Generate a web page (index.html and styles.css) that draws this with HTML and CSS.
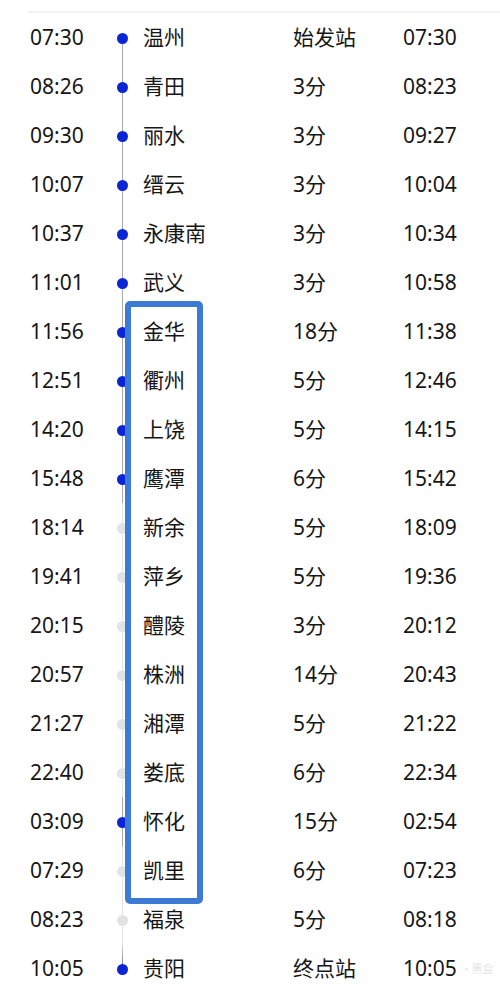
FILE: index.html
```html
<!DOCTYPE html>
<html lang="zh-CN">
<head>
  <meta charset="UTF-8" />
  <title>经停站</title>
  <link rel="stylesheet" href="styles.css">
</head>
<body>

  <div class="page">
    <div class="top-rule"></div>

    <ul class="stops">
      <li class="stop first"><span class="time">07:30</span><span class="node"><i class="dot"></i></span><span class="name">温州</span><span class="wait">始发站</span><span class="time">07:30</span></li>
      <li class="stop"><span class="time">08:26</span><span class="node"><i class="dot"></i></span><span class="name">青田</span><span class="wait">3分</span><span class="time">08:23</span></li>
      <li class="stop"><span class="time">09:30</span><span class="node"><i class="dot"></i></span><span class="name">丽水</span><span class="wait">3分</span><span class="time">09:27</span></li>
      <li class="stop"><span class="time">10:07</span><span class="node"><i class="dot"></i></span><span class="name">缙云</span><span class="wait">3分</span><span class="time">10:04</span></li>
      <li class="stop"><span class="time">10:37</span><span class="node"><i class="dot"></i></span><span class="name">永康南</span><span class="wait">3分</span><span class="time">10:34</span></li>
      <li class="stop"><span class="time">11:01</span><span class="node"><i class="dot"></i></span><span class="name">武义</span><span class="wait">3分</span><span class="time">10:58</span></li>
      <li class="stop"><span class="time">11:56</span><span class="node"><i class="dot"></i></span><span class="name">金华</span><span class="wait">18分</span><span class="time">11:38</span></li>
      <li class="stop"><span class="time">12:51</span><span class="node"><i class="dot"></i></span><span class="name">衢州</span><span class="wait">5分</span><span class="time">12:46</span></li>
      <li class="stop"><span class="time">14:20</span><span class="node"><i class="dot"></i></span><span class="name">上饶</span><span class="wait">5分</span><span class="time">14:15</span></li>
      <li class="stop"><span class="time">15:48</span><span class="node"><i class="dot"></i></span><span class="name">鹰潭</span><span class="wait">6分</span><span class="time">15:42</span></li>
      <li class="stop skip"><span class="time">18:14</span><span class="node"><i class="dot"></i></span><span class="name">新余</span><span class="wait">5分</span><span class="time">18:09</span></li>
      <li class="stop skip"><span class="time">19:41</span><span class="node"><i class="dot"></i></span><span class="name">萍乡</span><span class="wait">5分</span><span class="time">19:36</span></li>
      <li class="stop skip"><span class="time">20:15</span><span class="node"><i class="dot"></i></span><span class="name">醴陵</span><span class="wait">3分</span><span class="time">20:12</span></li>
      <li class="stop skip"><span class="time">20:57</span><span class="node"><i class="dot"></i></span><span class="name">株洲</span><span class="wait">14分</span><span class="time">20:43</span></li>
      <li class="stop skip"><span class="time">21:27</span><span class="node"><i class="dot"></i></span><span class="name">湘潭</span><span class="wait">5分</span><span class="time">21:22</span></li>
      <li class="stop skip"><span class="time">22:40</span><span class="node"><i class="dot"></i></span><span class="name">娄底</span><span class="wait">6分</span><span class="time">22:34</span></li>
      <li class="stop"><span class="time">03:09</span><span class="node"><i class="dot"></i></span><span class="name">怀化</span><span class="wait">15分</span><span class="time">02:54</span></li>
      <li class="stop skip"><span class="time">07:29</span><span class="node"><i class="dot"></i></span><span class="name">凯里</span><span class="wait">6分</span><span class="time">07:23</span></li>
      <li class="stop skip before-last"><span class="time">08:23</span><span class="node"><i class="dot"></i></span><span class="name">福泉</span><span class="wait">5分</span><span class="time">08:18</span></li>
      <li class="stop last"><span class="time">10:05</span><span class="node"><i class="dot"></i></span><span class="name">贵阳</span><span class="wait">终点站</span><span class="time">10:05</span></li>
    </ul>

    <div class="highlight"></div>
    <div class="watermark">◔ 黑盒</div>
  </div>

</body>
</html>
```

FILE: styles.css
```css
body {
  margin: 0;
  background: #fff;
  font-family: "Noto Sans", "Noto Sans CJK SC", sans-serif;
  color: #161616;
}

.page {
  position: relative;
  width: 500px;
  height: 1003px;
  overflow: hidden;
}

.top-rule {
  margin: 11px 0 0 28px;
  height: 2px;
  background: #f2f2f2;
}

.stops {
  list-style: none;
  margin: 0;
  padding: 0 0 0 30px;
}

.stop {
  display: grid;
  grid-template-columns: 78px 30px 155px 110px 1fr;
  align-items: center;
  height: 49px;
  font-size: 21px;
  line-height: 1;
}

.name {
  padding-left: 5px;
}

.node {
  position: relative;
  height: 49px;
}

/* the track runs through every node */
.node::before {
  content: "";
  position: absolute;
  left: 14px;
  top: 0;
  bottom: 0;
  width: 1px;
  background: #a6a8b4;
}

.first .node::before {
  top: 50%;
}

.last .node::before {
  bottom: 50%;
  background: linear-gradient(#dcdcdc, #6d6d78);
}

.skip .node::before {
  background: #e4e4e6;
}

.before-last .node::before {
  background: #e4e4e6;
}

.dot {
  position: absolute;
  left: 9px;
  top: 50%;
  width: 11px;
  height: 11px;
  margin-top: -5px;
  border-radius: 50%;
  background: #0b25d4;
}

.skip .dot {
  background: #e3e3e3;
}

.highlight {
  position: absolute;
  left: 125px;
  top: 301px;
  width: 78px;
  height: 603px;
  box-sizing: border-box;
  border: 6px solid #3b7bd4;
  border-radius: 5px;
}

.watermark {
  position: absolute;
  left: 462px;
  top: 960px;
  font-size: 11px;
  color: #e6e6e6;
  white-space: nowrap;
}
```
